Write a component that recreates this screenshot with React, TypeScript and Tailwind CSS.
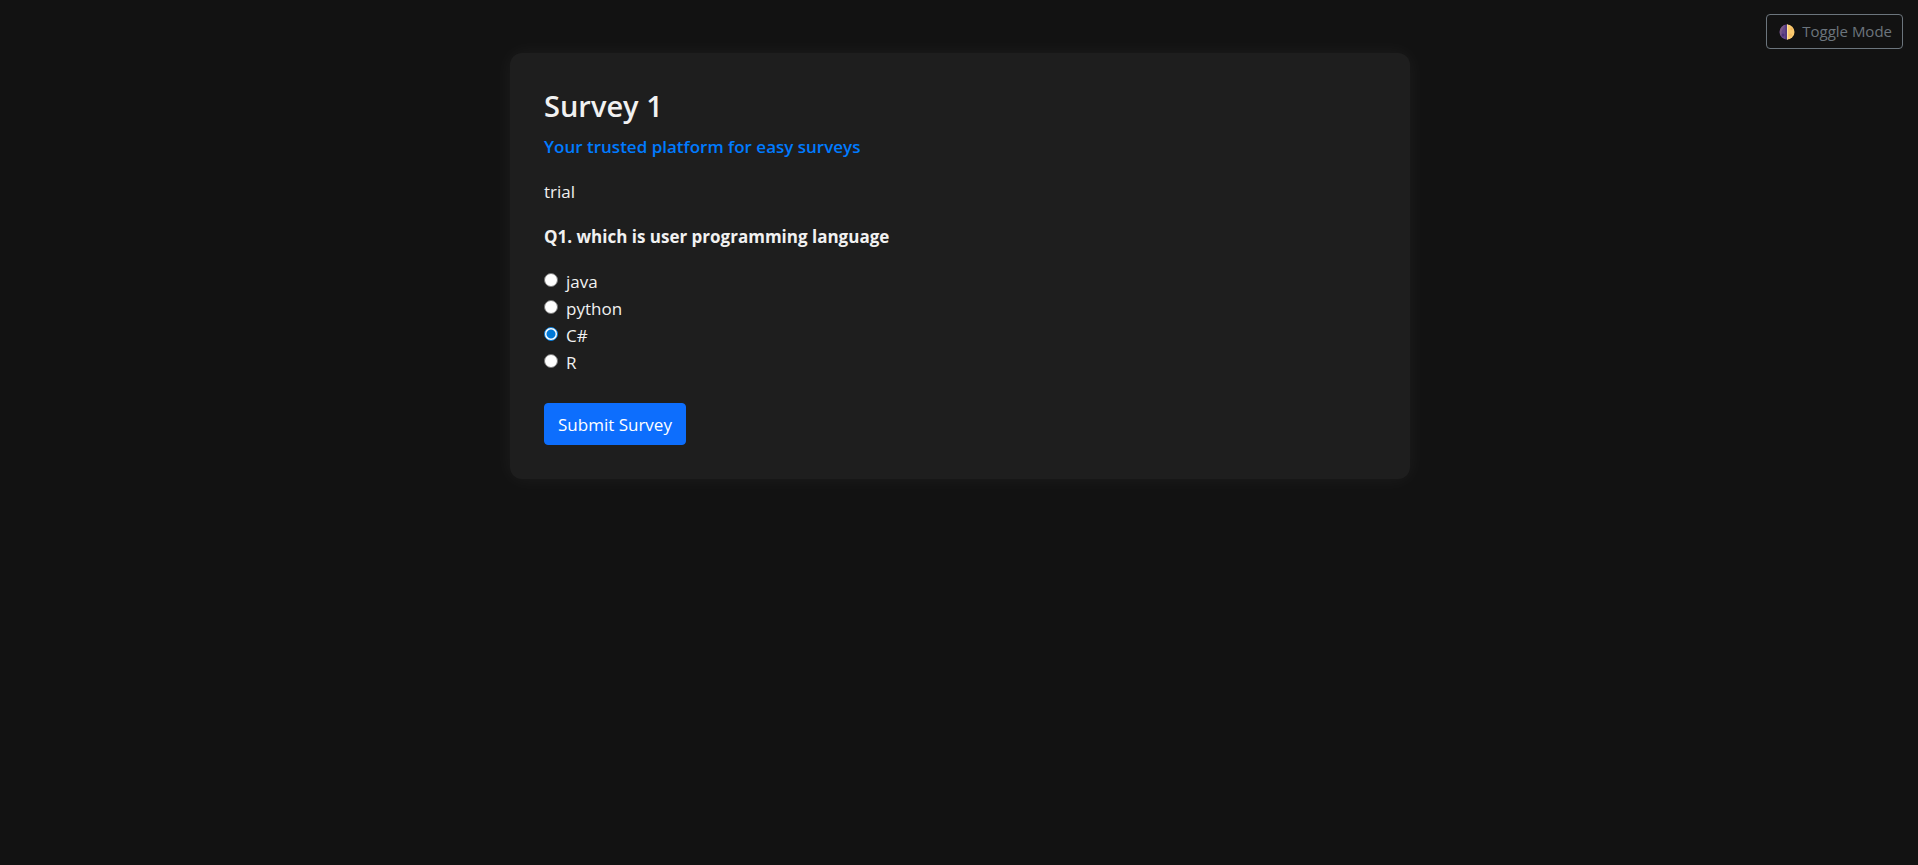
import { useState } from "react";

const options = ["java", "python", "C#", "R"];

function HalfMoon() {
  return (
    <svg viewBox="0 0 16 16" className="size-4 shrink-0" aria-hidden="true">
      <path d="M8 0.500a7.500 7.500 0 0 0 0 15z" fill="#654787" />
      <path d="M8 0.500a7.500 7.500 0 0 1 0 15z" fill="#fccb70" />
      <path d="M6 0.800a7.500 7.500 0 0 0-3.500 12C3.500 11 1.800 9.500 2.600 7.500S5 3 6 0.800z" fill="#8a6586" opacity="0.6" />
      <path d="M6.300 0.700L8 0.500v15l-1.700-0.200z" fill="#452c78" opacity="0.6" />
      <path d="M8 0.500h1v15H8z" fill="#ffe3a0" />
      <circle cx="12.500" cy="5" r="1.200" fill="#f2b75c" />
      <circle cx="11.500" cy="11" r="1.600" fill="#f6bd62" />
      <circle cx="4" cy="11" r="1.500" fill="#4c3278" />
    </svg>
  );
}

export default function App() {
  const [answer, setAnswer] = useState("C#");
  const [dark, setDark] = useState(true);

  return (
    <div
      className={`relative min-h-screen py-[53px] pr-4 pl-[18px] font-['Open_Sans','Noto_Sans',sans-serif] text-[17px] leading-[27px] ${
        dark ? "bg-[#121212] text-[#f1f1f1]" : "bg-white text-[#212529]"
      }`}
    >
      <button
        type="button"
        onClick={() => setDark(!dark)}
        className="absolute top-[14px] right-[15px] flex items-center gap-[7px] rounded-[4px] border border-[#6c757d] py-1 pr-[9px] pl-3 text-[15px] leading-[25px] text-[#6c757d]"
      >
        <HalfMoon />
        <span className="pr-px">Toggle Mode</span>
      </button>

      <main
        className={`mx-auto max-w-[900px] rounded-xl p-[34px] ${
          dark
            ? "bg-[#1e1e1e] shadow-[0_0_20px_rgba(255,255,255,0.05)]"
            : "bg-white shadow-[0_0_20px_rgba(0,0,0,0.1)]"
        }`}
      >
        <h1 className="mb-2 text-[29px] leading-[38px] font-semibold">Survey 1</h1>
        <p className="mb-[18px] font-semibold text-[#007bff]">Your trusted platform for easy surveys</p>
        <p className="mb-[18px]">trial</p>
        <form onSubmit={(event) => event.preventDefault()}>
          <fieldset className="mb-[27px]">
            <legend className="mb-[18px] font-bold">Q1. which is user programming language</legend>
            {options.map((option) => (
              <label key={option} className="flex w-fit items-start gap-2">
                <input
                  type="radio"
                  name="question-1"
                  value={option}
                  checked={answer === option}
                  onChange={() => setAnswer(option)}
                  className="mt-[5px] size-[14px] shrink-0 appearance-none rounded-full border border-[#767676] bg-white checked:border-[#0078d7] checked:bg-[radial-gradient(circle,#0078d7_0_4px,#ffffff_5px)]"
                />
                {option}
              </label>
            ))}
          </fieldset>
          <button
            type="submit"
            className="rounded-[4px] border border-[#0d6efd] bg-[#0d6efd] px-[13px] pt-2 pb-[7px] leading-[25px] text-white"
          >
            Submit Survey
          </button>
        </form>
      </main>
    </div>
  );
}
